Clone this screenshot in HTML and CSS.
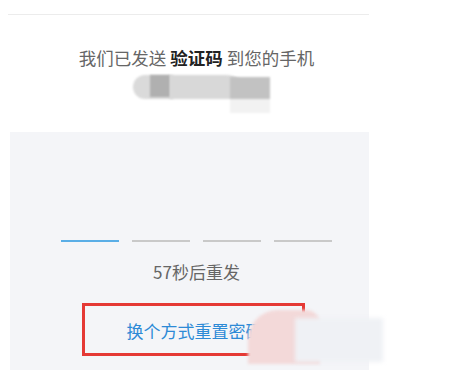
FILE: index.html
```html
<!DOCTYPE html>
<html lang="zh-CN">
<head>
    <meta charset="UTF-8">
    <meta name="viewport" content="width=device-width, initial-scale=1.0">
    <title>输入验证码</title>
    <link rel="stylesheet" href="styles.css">
</head>
<body>

    <div class="page">
        <div class="divider"></div>

        <p class="intro">我们已发送 <strong>验证码</strong> 到您的手机</p>

        <!-- phone number, pixelated in the screenshot -->
        <div class="phone">
            <span class="blot blot-round"></span>
            <span class="blot blot-dark"></span>
            <span class="blot blot-mid"></span>
            <span class="blot blot-end"></span>
        </div>

        <div class="panel">
            <div class="code-row">
                <span class="code-cell active"></span>
                <span class="code-cell"></span>
                <span class="code-cell"></span>
                <span class="code-cell"></span>
            </div>

            <p class="countdown">57秒后重发</p>

            <div class="switch-box">
                <a class="switch-link" href="#">换个方式重置密码</a>
                <span class="smudge smudge-pink"></span>
                <span class="smudge smudge-light"></span>
            </div>
        </div>
    </div>

</body>
</html>
```

FILE: styles.css
```css
body {
    margin: 0;
    background-color: #ffffff;
    font-family: "Noto Sans CJK SC", "Noto Sans", sans-serif;
}

.page {
    width: 361px;
    margin-left: 8px;
}

.divider {
    margin-top: 14px;
    height: 1px;
    background-color: #ececec;
}

.intro {
    margin: 31px 0 0;
    padding-left: 16px;
    text-align: center;
    font-size: 17.5px;
    line-height: 24px;
    color: #666;
}

.intro strong {
    color: #222;
}

.phone {
    position: relative;
    height: 42px;
    margin-top: 3px;
}

.blot {
    position: absolute;
    filter: blur(1px);
}

.blot-round {
    left: 125px;
    top: 2px;
    width: 40px;
    height: 24px;
    border-radius: 12px 0 0 12px;
    background-color: #dadada;
}

.blot-dark {
    left: 142px;
    top: 2px;
    width: 20px;
    height: 22px;
    background-color: #b0b0b0;
}

.blot-mid {
    left: 162px;
    top: 2px;
    width: 80px;
    height: 24px;
    border-radius: 0 30px 0 0;
    background-color: #d8d8d8;
}

.blot-end {
    left: 222px;
    top: 4px;
    width: 40px;
    height: 36px;
    background: linear-gradient(#c2c2c2 0, #c2c2c2 60%, #f2f2f2 60%);
}

.panel {
    margin-top: 17px;
    margin-left: 2px;
    padding: 108px 0 14px;
    background-color: #f4f5f8;
}

.code-row {
    display: flex;
    justify-content: center;
    gap: 13px;
    padding-left: 14px;
}

.code-cell {
    width: 58px;
    height: 2px;
    background-color: #c9c9c9;
}

.code-cell.active {
    background-color: #5aaee6;
}

.countdown {
    margin: 18px 0 0;
    padding-left: 14px;
    text-align: center;
    font-size: 17px;
    line-height: 24px;
    color: #666;
}

.switch-box {
    position: relative;
    box-sizing: border-box;
    width: 223px;
    height: 53px;
    margin: 19px 0 0 72px;
    border: 3px solid #e53935;
    display: flex;
    align-items: center;
    justify-content: center;
}

.switch-link {
    font-size: 17px;
    color: #2d8ad6;
    text-decoration: none;
    margin-left: 2px;
    margin-top: 2px;
}

.smudge {
    position: absolute;
}

.smudge-pink {
    left: 163px;
    top: 4px;
    width: 72px;
    height: 54px;
    border-radius: 30px 14px 0 0;
    background-color: #f3d9d9;
    filter: blur(1.5px);
}

.smudge-light {
    left: 210px;
    top: 12px;
    width: 88px;
    height: 44px;
    background-color: #eff1f5;
    filter: blur(2px);
}
```
